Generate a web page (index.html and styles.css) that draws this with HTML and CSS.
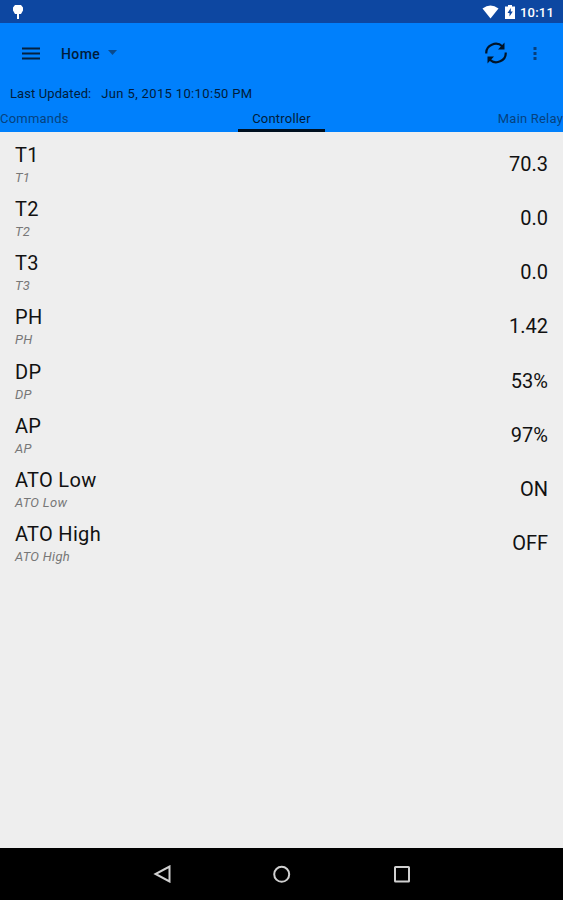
FILE: index.html
```html
<!DOCTYPE html>
<html>
<head>
    <meta charset="utf-8">
    <title>Controller Status</title>
    <link rel="stylesheet" href="styles.css">
</head>
<body>
    <div class="status-bar">
        <svg class="notify" width="12" height="16" viewBox="0 0 12 16">
            <path d="M3 1h6l2 2.500v3l-2 3.500H7v5H5v-5H3L1 6.500v-3z" fill="#fff"/>
        </svg>
        <div class="status-right">
            <svg width="17" height="14" viewBox="0 0 17 14">
                <path d="M0.500 3.500Q8.500-2.500 16.500 3.500L8.500 13.500z" fill="#fff"/>
            </svg>
            <svg class="battery" width="10" height="14" viewBox="0 0 10 14">
                <path d="M3 0h4v1.500h3V14H0V1.500h3z" fill="#fff"/>
                <path d="M5.800 3L2.500 8h2v3.500l3.300-5h-2z" fill="#0d47a1"/>
            </svg>
            <span class="clock">10:11</span>
        </div>
    </div>

    <div class="header">
        <div class="toolbar">
            <svg class="menu" width="18" height="13" viewBox="0 0 18 13">
                <path d="M0 1.500h18M0 6.500h18M0 11.500h18" stroke="#04213f" stroke-width="2"/>
            </svg>
            <span class="page-name">Home</span>
            <svg class="arrow" width="9" height="5" viewBox="0 0 9 5">
                <path d="M0 0h9L4.500 5z" fill="#0a4a8c"/>
            </svg>
            <svg class="refresh" width="24" height="24" viewBox="0 0 24 24">
                <path d="M2.300 12.500A9.500 9 0 0 1 18.500 5.500M21.700 11.500A9.500 9 0 0 1 5.500 18.500" fill="none" stroke="#001428" stroke-width="2.200"/>
                <path d="M20.500 1.500v7H14zM3.500 22.500v-7H10z" fill="#001428"/>
            </svg>
            <svg class="more" width="4" height="15" viewBox="0 0 4 15">
                <path d="M0.500 1h3v3h-3zM0.500 6h3v3h-3zM0.500 11h3v3h-3z" fill="#063f7c"/>
            </svg>
        </div>
        <div class="updated"><span class="caption">Last Updated:</span><span class="date">Jun 5, 2015 10:10:50 PM</span></div>
        <div class="tabs">
            <span class="tab">Commands</span>
            <span class="tab active">Controller</span>
            <span class="tab last">Main Relay</span>
        </div>
    </div>

    <div class="list">
        <div class="row">
            <div><div class="name">T1</div><div class="sub">T1</div></div>
            <div class="value">70.3</div>
        </div>
        <div class="row">
            <div><div class="name">T2</div><div class="sub">T2</div></div>
            <div class="value">0.0</div>
        </div>
        <div class="row">
            <div><div class="name">T3</div><div class="sub">T3</div></div>
            <div class="value">0.0</div>
        </div>
        <div class="row">
            <div><div class="name">PH</div><div class="sub">PH</div></div>
            <div class="value">1.42</div>
        </div>
        <div class="row">
            <div><div class="name">DP</div><div class="sub">DP</div></div>
            <div class="value">53%</div>
        </div>
        <div class="row">
            <div><div class="name">AP</div><div class="sub">AP</div></div>
            <div class="value">97%</div>
        </div>
        <div class="row">
            <div><div class="name">ATO Low</div><div class="sub">ATO Low</div></div>
            <div class="value">ON</div>
        </div>
        <div class="row">
            <div><div class="name">ATO High</div><div class="sub">ATO High</div></div>
            <div class="value">OFF</div>
        </div>
    </div>

    <div class="nav-bar">
        <svg width="18" height="18" viewBox="0 0 18 18">
            <path d="M16.500 1.500v15L2.500 9z"/>
        </svg>
        <svg width="18" height="18" viewBox="0 0 18 18">
            <circle cx="8.700" cy="9.300" r="7.500"/>
        </svg>
        <svg width="18" height="18" viewBox="0 0 18 18">
            <rect x="2" y="2" width="14" height="14.500" rx="0.500"/>
        </svg>
    </div>
</body>
</html>
```
FILE: styles.css
```css
* {
    box-sizing: border-box;
}

body {
    margin: 0;
    height: 900px;
    display: flex;
    flex-direction: column;
    overflow: hidden;
    font-family: Roboto, sans-serif;
    background-color: #eeeeee;
}

svg {
    display: block;
    flex: none;
}

.status-bar {
    height: 23px;
    padding: 1px 9px 0 12px;
    display: flex;
    align-items: center;
    justify-content: space-between;
    background-color: #0d47a1;
}

.status-right {
    display: flex;
    align-items: center;
}

.battery {
    margin-left: 6px;
}

.clock {
    margin-left: 5px;
    color: white;
    font-size: 13px;
    font-weight: 500;
    letter-spacing: 0.2px;
}

.header {
    height: 109px;
    background-color: #0080fc;
    color: #001c3a;
}

.toolbar {
    height: 61px;
    padding: 0 26px 0 22px;
    display: flex;
    align-items: center;
}

.page-name {
    margin-left: 21px;
    font-size: 14px;
    font-weight: 500;
    letter-spacing: 0.4px;
}

.arrow {
    margin-left: 8px;
    margin-bottom: 2px;
}

.refresh {
    margin-left: auto;
    margin-bottom: 2px;
}

.more {
    margin-left: 25px;
}

.updated {
    height: 20px;
    padding-left: 10px;
    line-height: 20px;
    font-size: 13px;
    white-space: nowrap;
}

.caption {
    margin-right: 10px;
    letter-spacing: 0.1px;
}

.date {
    letter-spacing: 0.35px;
}

.tabs {
    height: 28px;
    display: flex;
    justify-content: space-between;
    font-size: 13px;
    line-height: 29px;
    letter-spacing: 0.2px;
}

.tab {
    width: 87px;
    color: #06427f;
}

.active {
    text-align: center;
    color: #001c3a;
    border-bottom: 3px solid #00101f;
}

.last {
    text-align: right;
}

.list {
    flex: 1;
    padding: 10px 15px 0;
}

.row {
    height: 54.150px;
    display: flex;
    justify-content: space-between;
}

.name {
    height: 27px;
    line-height: 27px;
    font-size: 20px;
    letter-spacing: 0.3px;
    color: #111;
}

.sub {
    line-height: 18px;
    font-size: 13px;
    font-style: italic;
    letter-spacing: 0.3px;
    color: #777;
}

.value {
    line-height: 45px;
    font-size: 20px;
    color: #111;
}

.nav-bar {
    height: 52px;
    display: flex;
    align-items: center;
    justify-content: center;
    gap: 102px;
    background-color: black;
}

.nav-bar svg {
    fill: none;
    stroke: #d0d0d0;
    stroke-width: 2;
}
```
